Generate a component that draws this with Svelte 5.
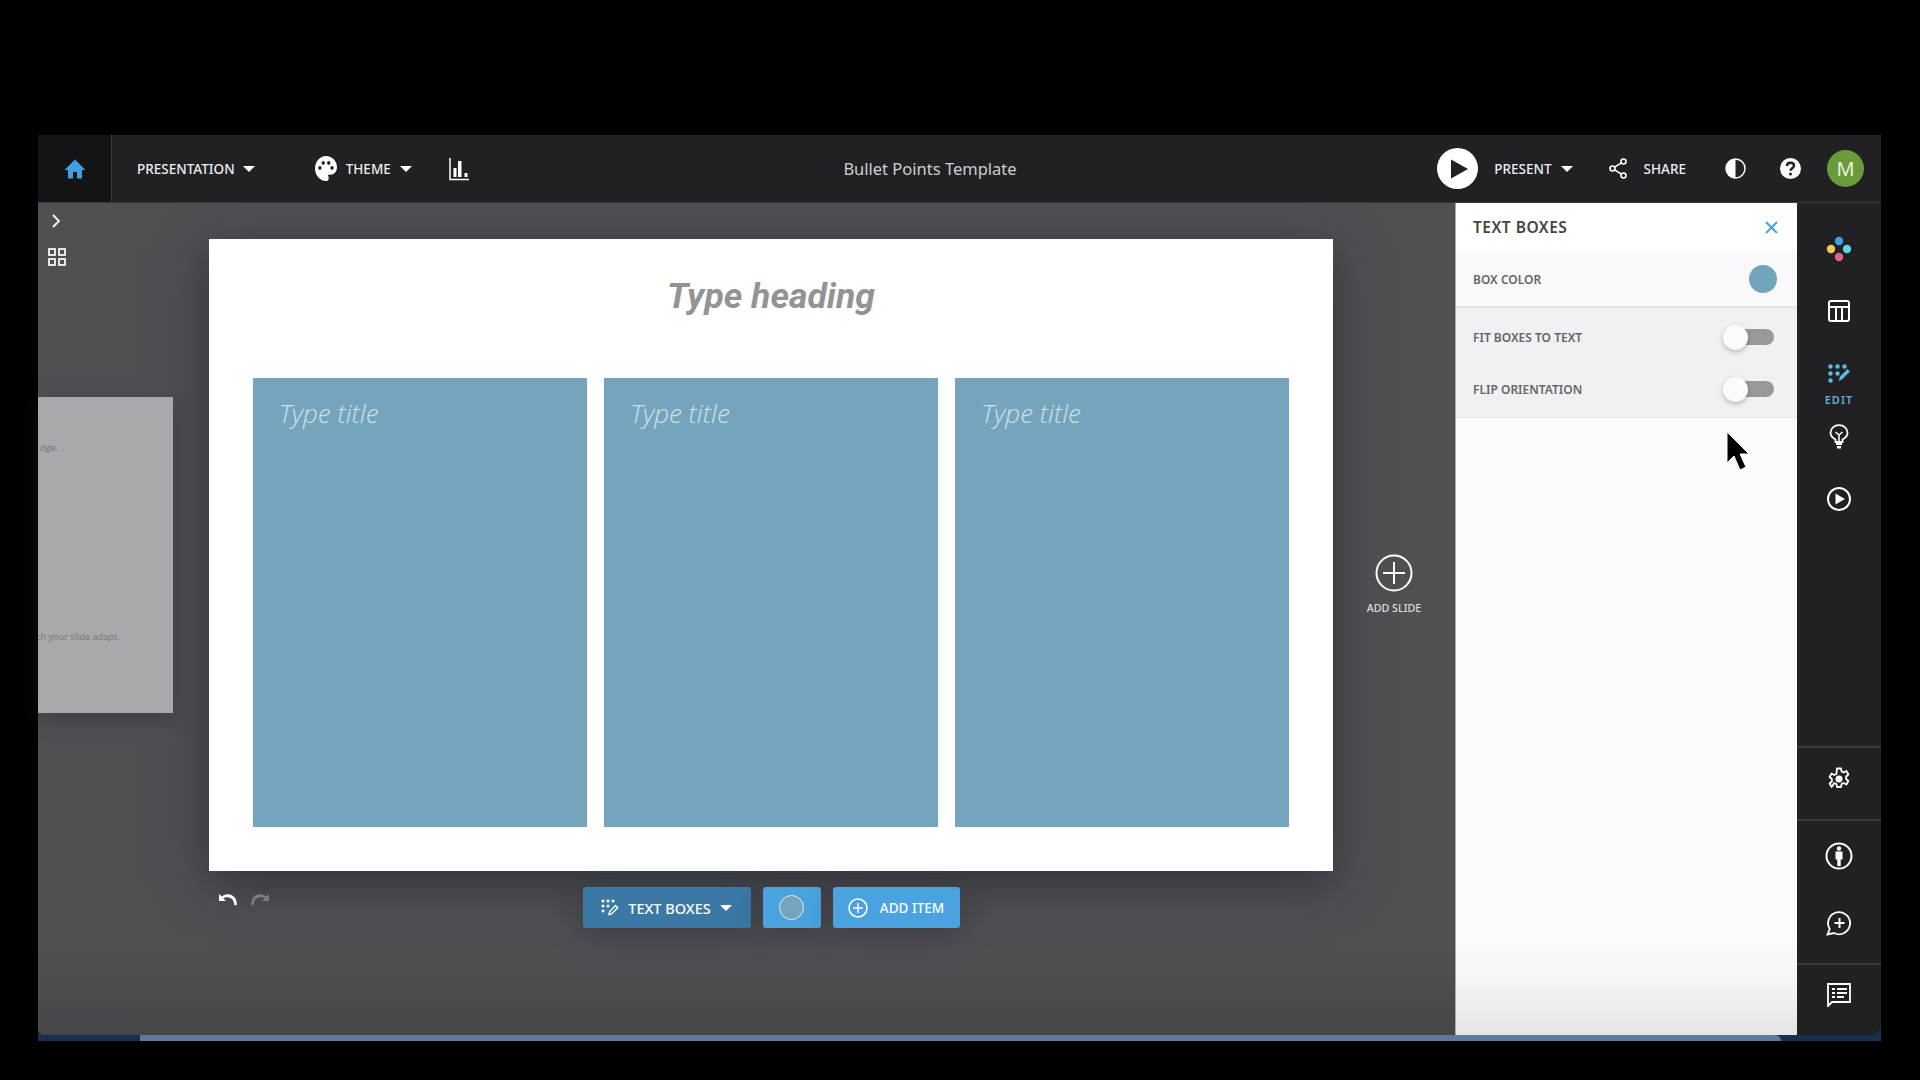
<script>
  let title = 'Bullet Points Template';
  let columns = ['Type title', 'Type title', 'Type title'];
  let options = [
    { label: 'FIT BOXES TO TEXT', on: false },
    { label: 'FLIP ORIENTATION', on: false }
  ];
</script>

<div class="window">
  <header class="topbar">
    <div class="home">
      <svg width="24" height="24" viewBox="0 0 24 24"><path fill="#3f9fe0" d="M12 2.500 1.500 13H5v8.500h5V15h4v6.500h5V13h3.500z"/></svg>
    </div>
    <div class="menu">
      <span class="item first">PRESENTATION <i class="caret"></i></span>
      <span class="item theme">
        <svg width="22" height="25" viewBox="2 2 20 20" preserveAspectRatio="none"><path fill="#fff" fill-rule="evenodd" d="M12 2C6.490 2 2 6.490 2 12s4.490 10 10 10c1.380 0 2.500-1.120 2.500-2.500 0-.61-.23-1.200-.64-1.670-.08-.1-.13-.21-.13-.33 0-.28.22-.5.5-.5H16c3.310 0 6-2.690 6-6 0-4.960-4.490-9-10-9zm5.500 11c-.83 0-1.500-.67-1.500-1.500s.67-1.500 1.500-1.500 1.500.67 1.500 1.500-.67 1.500-1.500 1.500zm-3-4c-.83 0-1.500-.67-1.500-1.500S13.670 6 14.500 6s1.500.67 1.500 1.500S15.330 9 14.500 9zM5 11.500c0-.83.67-1.500 1.500-1.500s1.500.67 1.500 1.500S7.330 13 6.500 13 5 12.330 5 11.500zm6-4c0 .83-.67 1.500-1.500 1.500S8 8.330 8 7.500 8.670 6 9.500 6s1.500.67 1.500 1.500z"/></svg>
        THEME <i class="caret"></i>
      </span>
      <svg class="chart" width="20" height="24" viewBox="0 0 20 24"><path fill="none" stroke="#fff" stroke-width="1.500" d="M1 1v21.500h19"/><path fill="#fff" d="M4.500 11h3v9h-3zM9 4h3.500v16H9zM15.500 16h3v4h-3z"/></svg>
    </div>
    <div class="doc-title">{title}</div>
    <div class="actions">
      <span class="play">
        <svg width="20" height="22" viewBox="0 0 20 22"><path fill="#222226" d="M2 1.500 19 11 2 20.500z"/></svg>
      </span>
      <span class="item present">PRESENT <i class="caret"></i></span>
      <svg class="share" width="18" height="21" viewBox="0 0 18 21"><g fill="none" stroke="#fff" stroke-width="1.600"><circle cx="14.500" cy="3.500" r="2.500"/><circle cx="3.500" cy="10.500" r="2.500"/><circle cx="14.500" cy="17.500" r="2.500"/><path d="M5.600 9.200 12.400 4.800M5.600 11.800l6.800 4.400"/></g></svg>
      <span class="item share-label">SHARE</span>
      <svg class="contrast" width="21" height="21" viewBox="0 0 21 21"><circle cx="10.500" cy="10.500" r="9.500" fill="#222226" stroke="#fff" stroke-width="1.500"/><path fill="#fff" d="M10.500 1a9.500 9.500 0 0 0 0 19z"/></svg>
      <svg class="help" width="21" height="21" viewBox="0 0 21 21"><circle cx="10.500" cy="10.500" r="10.500" fill="#fff"/><path fill="none" stroke="#222226" stroke-width="2.400" d="M7 8c0-2 1.500-3.200 3.500-3.200S14 6 14 7.800c0 2.400-3.500 2.600-3.500 5"/><circle cx="10.500" cy="16" r="1.500" fill="#222226"/></svg>
      <span class="avatar">M</span>
    </div>
  </header>

  <div class="body">
    <main class="stage">
      <aside class="left">
        <svg class="chevron" width="10" height="14" viewBox="0 0 10 14"><path fill="none" stroke="#fff" stroke-width="1.800" d="M2 1l6 6-6 6"/></svg>
        <svg class="grid" width="18" height="18" viewBox="0 0 18 18"><g fill="none" stroke="#fff" stroke-width="1.700"><rect x="1" y="1" width="6" height="6"/><rect x="11" y="1" width="6" height="6"/><rect x="1" y="11" width="6" height="6"/><rect x="11" y="11" width="6" height="6"/></g></svg>
        <div class="thumb">
          <span class="t1">dge.</span>
          <span class="t2">ch your slide adapt.</span>
        </div>
      </aside>

      <div class="center">
        <section class="slide">
          <h1>Type heading</h1>
          <div class="columns">
            {#each columns as col}
              <div class="box">{col}</div>
            {/each}
          </div>
        </section>
        <div class="tools">
          <div class="history">
            <svg width="18" height="14" viewBox="0 0 18 14"><path fill="#fff" d="M0 1v7h7L4.300 5.400C6 4 9.800 3.500 13 6c1.200 1 2 3 2.300 6l2.500.2C18 8 16.500 4.500 14 3 10.500.5 6.200 1 2.800 3.400z"/></svg>
            <svg width="18" height="14" viewBox="0 0 18 14"><path fill="#7b7b80" d="M18 1v7h-7l2.700-2.600C12 4 8.200 3.500 5 6c-1.200 1-2 3-2.300 6L.2 12.200C0 8 1.500 4.500 4 3c3.500-2.500 7.800-2 11.200.4z"/></svg>
          </div>
          <button class="btn dark">
            <svg width="18" height="18" viewBox="0 0 18 18"><g fill="#fff"><circle cx="2" cy="2" r="1.500"/><circle cx="7" cy="2" r="1.500"/><circle cx="12" cy="2" r="1.500"/><circle cx="2" cy="7" r="1.500"/><circle cx="7" cy="7" r="1.500"/><circle cx="2" cy="12" r="1.500"/></g><path fill="none" stroke="#fff" stroke-width="1.400" d="M8 15.500l.7-3 5.800-6 2.200 2.200-5.800 6z"/></svg>
            <span class="tb-label">TEXT BOXES</span> <i class="caret"></i>
          </button>
          <button class="btn swatch-btn"><span class="swatch"></span></button>
          <button class="btn add">
            <svg width="20" height="20" viewBox="0 0 20 20"><circle cx="10" cy="10" r="9" fill="none" stroke="#fff" stroke-width="1.500"/><path stroke="#fff" stroke-width="1.500" d="M10 5v10M5 10h10"/></svg>
            <span class="add-label">ADD ITEM</span>
          </button>
        </div>
      </div>

      <div class="add-slide">
        <svg width="38" height="38" viewBox="0 0 38 38"><circle cx="19" cy="19" r="17.500" fill="none" stroke="#fff" stroke-width="2"/><path stroke="#fff" stroke-width="2" d="M19 8v22M8 19h22"/></svg>
        <span>ADD SLIDE</span>
      </div>
    </main>

    <aside class="panel">
      <div class="panel-head">
        <span>TEXT BOXES</span>
        <svg width="13" height="13" viewBox="0 0 13 13"><path stroke="#3fa0e0" stroke-width="1.800" d="M1 1l11 11M12 1 1 12"/></svg>
      </div>
      <div class="color-row">
        <span>BOX COLOR</span>
        <i class="dot"></i>
      </div>
      <div class="toggles">
        {#each options as opt}
          <label class="toggle-row">
            <span>{opt.label}</span>
            <span class="track" class:on={opt.on}><i class="knob"></i></span>
          </label>
        {/each}
      </div>
      <svg class="cursor" width="24" height="42" viewBox="0 0 24 42"><path fill="#000" stroke="#fff" stroke-width="1" d="M1 1v31l7-7 6 14 6-3-6-13h9z"/></svg>
    </aside>

    <nav class="rail">
      <div class="rail-top">
        <svg width="26" height="26" viewBox="0 0 26 26"><circle cx="13" cy="5" r="4.200" fill="#3f9fe0"/><circle cx="5" cy="13" r="4.200" fill="#f3c94f"/><circle cx="21" cy="13" r="4.200" fill="#61d4de"/><circle cx="13" cy="21" r="4.200" fill="#e0628a"/></svg>
        <svg class="r-layout" width="22" height="22" viewBox="0 0 22 22"><rect x="1" y="1" width="20" height="20" rx="2" fill="none" stroke="#fff" stroke-width="2"/><path stroke="#fff" stroke-width="2" fill="none" d="M1 7h20M8 7v14M14 7v14"/></svg>
        <div class="r-edit">
          <svg width="22" height="20" viewBox="0 0 22 20"><g fill="#5bbbe6"><circle cx="2.500" cy="2.500" r="2.200"/><circle cx="9.500" cy="2.500" r="2.200"/><circle cx="16.500" cy="2.500" r="2.200"/><circle cx="2.500" cy="9.500" r="2.200"/><circle cx="9.500" cy="9.500" r="2.200"/><circle cx="2.500" cy="16.500" r="2.200"/><path d="M11 16l1-3.500 7.500-7.500 2.500 2.500-7.500 7.500-3.500 2z"/></g></svg>
          <span>EDIT</span>
        </div>
        <svg class="r-bulb" width="20" height="25" viewBox="0 0 20 25"><path fill="none" stroke="#fff" stroke-width="1.800" d="M6.500 18v-2.500C3.500 14 1.500 11.500 1.500 8.700 1.500 4.500 5.200 1.200 10 1.200s8.500 3.300 8.500 7.500c0 2.800-2 5.300-5 6.800V18z"/><path fill="none" stroke="#fff" stroke-width="1.500" d="M6.500 8 10 11l3.500-3M10 11v6"/><path fill="#fff" d="M7 19h6v2H7zM8 22h4v2.500H8z"/></svg>
        <svg class="r-play" width="24" height="24" viewBox="0 0 24 24"><circle cx="12" cy="12" r="11" fill="none" stroke="#fff" stroke-width="2"/><path fill="#fff" d="M8.500 6.500 18 12l-9.500 5.500z"/></svg>
      </div>
      <div class="rail-cell gear">
        <svg width="24" height="24" viewBox="0 0 24 24"><path fill="none" stroke="#fff" stroke-width="1.800" stroke-linejoin="round" d="M10 1.500h4l.6 3 2.100 1 2.700-1.500 2 3.500-2.300 2a8 8 0 0 1 0 2.500l2.300 2-2 3.500-2.700-1.500-2.100 1-.6 3h-4l-.6-3-2.100-1L4.600 20l-2-3.500 2.300-2a8 8 0 0 1 0-2.500l-2.300-2 2-3.500 2.700 1.500 2.100-1z"/><circle cx="12" cy="12" r="3.500" fill="#fff"/></svg>
      </div>
      <div class="rail-cell people">
        <svg width="28" height="28" viewBox="0 0 28 28"><circle cx="14" cy="14" r="12.500" fill="none" stroke="#fff" stroke-width="2"/><circle cx="14" cy="6.500" r="2.200" fill="#fff"/><path fill="#fff" d="M10.500 9.500h7v8h-1.800V24h-3.400v-6.500h-1.800z"/></svg>
        <svg width="26" height="26" viewBox="0 0 26 26"><path fill="none" stroke="#fff" stroke-width="1.800" d="M1.500 24.500l2.200-5.500A11 11 0 1 1 8 23z"/><path stroke="#fff" stroke-width="2" d="M13.500 8v10M8.500 13h10"/></svg>
      </div>
      <div class="rail-cell notes">
        <svg width="24" height="24" viewBox="0 0 24 24"><path fill="none" stroke="#fff" stroke-width="1.800" d="M1 1h22v18H5l-4 4z"/><path stroke="#fff" stroke-width="1.800" d="M5 6h3M10 6h10M5 10h3M10 10h10M5 14h3M10 14h7"/></svg>
      </div>
    </nav>
  </div>
  <div class="strip"></div>
</div>

<style>
  :global(body) {
    background: #000;
  }

  .window {
    width: 1843px;
    height: 906px;
    margin: 135px 0 0 38px;
    display: flex;
    flex-direction: column;
    font-family: "Noto Sans", sans-serif;
    background: #1a2f50;
    color: #fff;
  }

  .topbar {
    height: 68px;
    flex: none;
    display: flex;
    align-items: center;
    background: #212124;
    border-bottom: 1px solid #3b3b3f;
    box-sizing: border-box;
    position: relative;
  }

  .home {
    width: 74px;
    height: 100%;
    flex: none;
    display: flex;
    align-items: center;
    justify-content: center;
    background: #141416;
    border-right: 1px solid #3b3b3f;
    box-sizing: border-box;
  }

  .menu {
    display: flex;
    align-items: center;
    padding-left: 25px;
  }

  .item {
    display: inline-flex;
    align-items: center;
    font-size: 13.500px;
    font-weight: 500;
    color: #eee;
    white-space: nowrap;
  }

  .caret {
    display: inline-block;
    width: 0;
    height: 0;
    border-left: 6px solid transparent;
    border-right: 6px solid transparent;
    border-top: 6px solid #fff;
    margin-left: 9px;
  }

  .first .caret {
    margin-left: 8px;
  }

  .theme {
    margin-left: 60px;
    gap: 9px;
  }

  .theme .caret {
    margin-left: 0;
  }

  .chart {
    margin-left: 37px;
  }

  .doc-title {
    position: absolute;
    left: 0;
    width: 1784px;
    text-align: center;
    font-size: 16.500px;
    color: #cfcfcf;
  }

  .actions {
    margin-left: auto;
    display: flex;
    align-items: center;
    padding-right: 17px;
  }

  .play {
    width: 41px;
    height: 41px;
    border-radius: 50%;
    background: #fff;
    display: flex;
    align-items: center;
    justify-content: center;
    padding-left: 3px;
    box-sizing: border-box;
  }

  .present {
    margin-left: 16px;
  }

  .share {
    margin-left: 36px;
  }

  .share-label {
    margin-left: 17px;
  }

  .contrast {
    margin-left: 39px;
  }

  .help {
    margin-left: 34px;
  }

  .avatar {
    margin-left: 26px;
    width: 37px;
    height: 37px;
    border-radius: 50%;
    background: #6a9a3c;
    display: flex;
    align-items: center;
    justify-content: center;
    font-size: 20px;
    color: #e8f0dd;
  }

  .body {
    flex: 1;
    display: flex;
    min-height: 0;
  }

  .stage {
    flex: 1;
    display: flex;
    background: linear-gradient(#4f4f54 90%, #47474b 100%);
    border-bottom-left-radius: 6px;
  }

  .left {
    width: 171px;
    flex: none;
    display: flex;
    flex-direction: column;
    align-items: flex-start;
  }

  .chevron {
    margin: 11px 0 0 13px;
  }

  .grid {
    margin: 20px 0 0 10px;
  }

  .thumb {
    position: relative;
    margin-top: 131px;
    width: 135px;
    height: 316px;
    background: #a9a8ad;
    box-shadow: 0 6px 18px rgba(40, 40, 45, 0.45);
    overflow: hidden;
    font-family: "Open Sans", sans-serif;
    font-size: 9.200px;
    color: #757578;
  }

  .t1,
  .t2 {
    position: absolute;
    white-space: nowrap;
  }

  .t1 {
    right: 115px;
    top: 44px;
  }

  .t2 {
    left: -2px;
    top: 233px;
  }

  .center {
    width: 1124px;
    flex: none;
    padding-top: 36px;
    display: flex;
    flex-direction: column;
  }

  .slide {
    height: 632px;
    background: #fff;
    box-shadow: 0 12px 44px rgba(30, 32, 40, 0.6);
    box-sizing: border-box;
    padding: 0 44px;
    display: flex;
    flex-direction: column;
  }

  .slide h1 {
    margin: 0;
    height: 139px;
    padding-top: 35px;
    box-sizing: border-box;
    text-align: center;
    font-family: Roboto, sans-serif;
    font-weight: 700;
    font-style: italic;
    font-size: 35.500px;
    line-height: 44px;
    color: #939393;
  }

  .columns {
    display: flex;
    gap: 17.500px;
    height: 449px;
  }

  .box {
    flex: 1;
    background: #75a5bc;
    padding: 19px 26px;
    font-family: "Open Sans", sans-serif;
    font-style: italic;
    font-weight: 300;
    font-size: 26px;
    line-height: 32px;
    color: #cfe0e8;
  }

  .tools {
    position: relative;
    display: flex;
    justify-content: center;
    gap: 12px;
    margin-top: 16px;
  }

  .history {
    position: absolute;
    left: 10px;
    top: 6px;
    display: flex;
    gap: 14px;
  }

  .btn {
    height: 41px;
    border: 0;
    border-radius: 3px;
    background: #4aa3e0;
    color: #fff;
    font-family: "Noto Sans", sans-serif;
    font-size: 13.500px;
    font-weight: 500;
    display: flex;
    align-items: center;
    gap: 9px;
    padding: 0;
    box-shadow: 0 8px 28px rgba(35, 37, 45, 0.4);
  }

  .btn.dark {
    background: #3a78a5;
    width: 168px;
    justify-content: center;
  }

  .tb-label {
    font-size: 14.500px;
  }

  .btn.dark .caret {
    margin-left: 0;
  }

  .swatch-btn {
    width: 58px;
    justify-content: center;
  }

  .swatch {
    width: 25px;
    height: 25px;
    border-radius: 50%;
    background: #75a5bc;
    border: 1.500px solid #dfe9ee;
    box-sizing: border-box;
  }

  .btn.add {
    width: 127px;
    justify-content: center;
  }

  .add-label {
    margin-left: 3px;
  }

  .add-slide {
    flex: 1;
    display: flex;
    flex-direction: column;
    align-items: center;
    padding-top: 351px;
    gap: 9px;
    font-size: 10.700px;
    font-weight: 500;
    color: #ddd;
  }

  .panel {
    position: relative;
    width: 342px;
    flex: none;
    background: linear-gradient(#fbfbfd 88%, #f6f6f6 93%, #e4e5e5 100%);
    color: #666;
    border-left: 1px solid #aaa;
    box-sizing: border-box;
  }

  .panel-head {
    height: 48px;
    background: #fff;
    display: flex;
    align-items: center;
    justify-content: space-between;
    padding: 0 19px 0 17px;
    font-size: 15.500px;
    font-weight: 600;
    letter-spacing: 0.5px;
    color: #444;
  }

  .color-row {
    height: 57px;
    display: flex;
    align-items: center;
    justify-content: space-between;
    padding: 1px 20px 0 17px;
    background: #f9f9fb;
    border-bottom: 2px solid #e4e4e6;
    box-sizing: border-box;
    font-size: 12px;
    font-weight: 600;
  }

  .dot {
    width: 28px;
    height: 28px;
    border-radius: 50%;
    background: #72a5bc;
  }

  .toggles {
    background: #f1f1f3;
    height: 110px;
    padding-top: 3px;
    box-sizing: border-box;
    border-bottom: 1px solid #e8e8ea;
  }

  .toggle-row {
    height: 52px;
    display: flex;
    align-items: center;
    justify-content: space-between;
    padding: 0 23px 0 17px;
    font-size: 12px;
    font-weight: 600;
  }

  .track {
    position: relative;
    width: 45px;
    height: 16px;
    border-radius: 8px;
    background: #999;
  }

  .knob {
    position: absolute;
    left: -6px;
    top: -4px;
    width: 25px;
    height: 25px;
    border-radius: 50%;
    background: #fbfbfb;
    box-shadow: 0 2px 5px rgba(0, 0, 0, 0.25);
  }

  .cursor {
    position: absolute;
    left: 270px;
    top: 228px;
  }

  .rail {
    width: 84px;
    flex: none;
    background: #212124;
    border-bottom-right-radius: 10px;
    display: flex;
    flex-direction: column;
    align-items: stretch;
  }

  .rail-top {
    height: 543px;
    display: flex;
    flex-direction: column;
    align-items: center;
    padding-top: 33px;
    box-sizing: border-box;
  }

  .r-layout {
    margin-top: 38px;
  }

  .r-edit {
    margin-top: 42px;
    display: flex;
    flex-direction: column;
    align-items: center;
    gap: 9px;
    font-size: 11px;
    font-weight: 600;
    letter-spacing: 1px;
    color: #5bb0dc;
    line-height: 14px;
  }

  .r-bulb {
    margin-top: 17px;
  }

  .r-play {
    margin-top: 38px;
  }

  .rail-cell {
    display: flex;
    flex-direction: column;
    align-items: center;
    border-top: 2px solid #3a3a3e;
    box-sizing: border-box;
  }

  .gear {
    height: 73px;
    padding-top: 19px;
  }

  .people {
    height: 144px;
    padding-top: 21px;
    gap: 40px;
  }

  .notes {
    flex: 1;
    padding-top: 18px;
  }

  .strip {
    height: 6px;
    flex: none;
    margin: 0 100px 0 102px;
    background: #5f789f;
    border-radius: 0 6px 0 0;
  }
</style>
